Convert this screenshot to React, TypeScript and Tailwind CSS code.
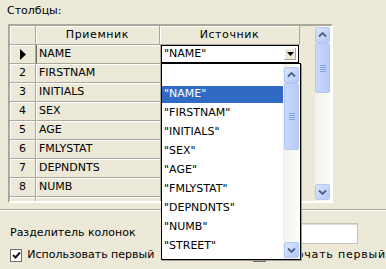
import React from "react"

const rows = ["NAME", "FIRSTNAM", "INITIALS", "SEX", "AGE", "FMLYSTAT", "DEPNDNTS", "NUMB"]
const items = ["NAME", "FIRSTNAM", "INITIALS", "SEX", "AGE", "FMLYSTAT", "DEPNDNTS", "NUMB", "STREET"]

function Chevron({ down }: { down?: boolean }) {
  return (
    <svg width="9" height="6" viewBox="0 0 9 6">
      <path
        d={down ? "M1 1.5 L4.5 5 L8 1.5" : "M1 4.5 L4.5 1 L8 4.5"}
        fill="none"
        stroke="#4d6185"
        strokeWidth="1.8"
      />
    </svg>
  )
}

function ScrollBtn({ down }: { down?: boolean }) {
  return (
    <div className="flex h-[16px] w-[15px] items-center justify-center rounded-[2px] border border-[#b3c7f5] bg-gradient-to-br from-[#dbe6fe] to-[#b4c9f6]">
      <Chevron down={down} />
    </div>
  )
}

function Thumb({ h }: { h: string }) {
  return (
    <div className={`flex w-[15px] flex-col items-center justify-center gap-[1px] rounded-[2px] border border-[#b3c7f5] bg-gradient-to-r from-[#c9d8fc] to-[#b6cbf7] ${h}`}>
      <div className="h-[1px] w-[6px] bg-[#8aa4df]" />
      <div className="h-[1px] w-[6px] bg-[#8aa4df]" />
      <div className="h-[1px] w-[6px] bg-[#8aa4df]" />
      <div className="h-[1px] w-[6px] bg-[#8aa4df]" />
    </div>
  )
}

export default function App() {
  return (
    <div className="relative h-[269px] w-[386px] overflow-hidden bg-[#ECE9D8] text-[11px] text-black [font-family:Tahoma,'DejaVu_Sans',sans-serif]">
      {/* label */}
      <div className="h-[24px] pl-[7px] pt-[4px] leading-[14px]">Столбцы:</div>

      {/* grid */}
      <div className="ml-[8px] flex h-[179px] w-[325px] border-2 border-t-[#ACA899] border-l-[#ACA899] border-r-white border-b-white">
        <div className="flex flex-1 flex-col overflow-hidden">
          {/* header */}
          <div className="flex h-[19px] shrink-0">
            <div className="w-[26px] border-r border-b border-[#ACA899] shadow-[inset_1px_1px_0_#fff]" />
            <div className="flex w-[124px] items-center justify-center border-r border-b border-[#ACA899] tracking-[0.6px] shadow-[inset_1px_1px_0_#fff]">Приемник</div>
            <div className="flex w-[140px] items-center justify-center border-r border-b border-[#ACA899] tracking-[0.6px] shadow-[inset_1px_1px_0_#fff]">Источник</div>
          </div>
          {[...rows, ""].map((r, i) => (
            <div key={i} className="flex h-[19px] shrink-0">
              <div className="flex w-[26px] items-center justify-center border-r border-b border-[#ACA899] shadow-[inset_1px_1px_0_#fff]">
                {i === 0 ? (
                  <svg width="6" height="11" viewBox="0 0 6 11">
                    <path d="M0 0 L6 5.5 L0 11 Z" fill="#000" />
                  </svg>
                ) : r ? (
                  i + 1
                ) : null}
              </div>
              <div className={`flex w-[124px] items-center border-b border-[#ACA899] pl-[2px] shadow-[inset_0_1px_0_#fff] ${i === 0 ? "border-l border-l-[#716f64]" : "border-l border-l-white"}`}>{r}</div>
              <div className="flex w-[140px] items-center border-b border-l border-[#ACA899] shadow-[inset_0_1px_0_#fff]">
                {i === 0 && (
                  <div className="flex h-[18px] w-[138px] items-center justify-between border border-black bg-white pl-[2px] pr-[2px]">
                    <span>"NAME"</span>
                    <div className="flex h-[12px] w-[12px] items-center justify-center bg-[#ECE9D8] shadow-[inset_-1px_-1px_0_#aca899,inset_1px_1px_0_#fff]">
                      <svg width="7" height="4" viewBox="0 0 7 4">
                        <path d="M0 0 H7 L3.5 4 Z" fill="#000" />
                      </svg>
                    </div>
                  </div>
                )}
              </div>
            </div>
          ))}
        </div>
        {/* grid scrollbar */}
        <div className="flex w-[16px] flex-col bg-gradient-to-r from-[#f3f1ea] to-[#fdfdfa] pt-[1px]">
          <ScrollBtn />
          <Thumb h="h-[50px]" />
          <div className="flex-1" />
          <ScrollBtn down />
          <div className="h-[1px]" />
        </div>
      </div>

      {/* separator */}
      <div className="mt-[6px] h-[2px] border-t border-b border-t-[#ACA899] border-b-white" />

      {/* column separator */}
      <div className="mt-[12px] flex h-[21px] items-center pl-[10px]">
        <span>Разделитель колонок</span>
        <div className="ml-auto mr-[28px] h-[21px] w-[120px] border border-[#c5c2b2] bg-white shadow-[inset_1px_1px_0_#dedbd0]" />
      </div>

      {/* checkboxes */}
      <div className="mt-[5px] flex h-[13px] items-center whitespace-nowrap pl-[10px]">
        <div className="flex h-[13px] w-[13px] items-center justify-center border border-[#6f6f6f] bg-white">
          <svg width="9" height="9" viewBox="0 0 9 9">
            <path d="M1 4 L3.5 6.5 L8 1.5" fill="none" stroke="#1a1a1a" strokeWidth="2" />
          </svg>
        </div>
        <span className="ml-[5px]">Использовать первый</span>
        <div className="ml-[99px] h-[13px] w-[13px] border border-[#6f6f6f] bg-white" />
        <span className="ml-[5px] tracking-[0.8px]">Включать первый</span>
      </div>

      {/* opened drop-down list */}
      <div className="absolute left-[161px] top-[63px] flex h-[197px] w-[140px] border border-black bg-white shadow-[1px_1px_0_#9d9b91]">
        <div className="flex flex-1 flex-col">
          <div className="h-[21px]" />
          {items.map((it, i) => (
            <div key={it} className="flex h-[19px] items-center">
              <div className={`flex h-[17px] w-full items-center pl-[2px] ${i === 0 ? "bg-[#316AC5] text-white" : ""}`}>"{it}"</div>
            </div>
          ))}
        </div>
        <div className="flex w-[17px] flex-col bg-gradient-to-r from-[#f3f1ea] to-[#fdfdfa] pl-[1px] pt-[3px] pb-[1px]">
          <ScrollBtn />
          <Thumb h="h-[67px]" />
          <div className="flex-1" />
          <ScrollBtn down />
        </div>
      </div>
    </div>
  )
}
